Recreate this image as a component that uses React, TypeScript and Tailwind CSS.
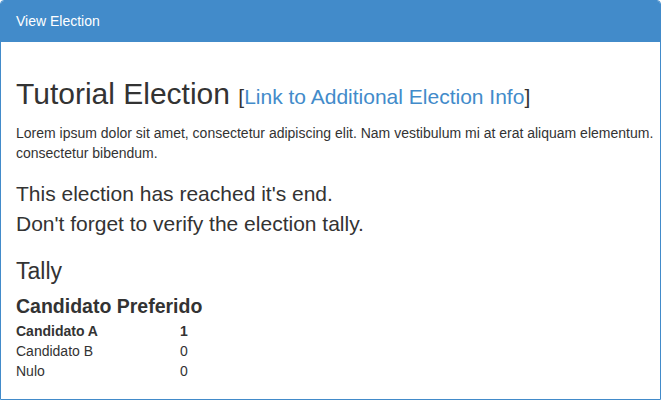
import React from 'react';

const rows = [
  { name: 'Candidato A', votes: 1, winner: true },
  { name: 'Candidato B', votes: 0, winner: false },
  { name: 'Nulo', votes: 0, winner: false },
];

const App: React.FC = () => {
  return (
    <div className="w-[661px] h-[400px] bg-white font-['Liberation_Sans',Arial,sans-serif] text-[#333333] overflow-hidden">
      <div className="h-full flex flex-col border border-[#428bca] rounded-t-[4px] overflow-hidden">
        {/* Panel heading */}
        <div className="bg-[#428bca] border-b border-[#428bca] px-[15px] py-[10px] text-[14px] leading-[20px] text-white">
          View Election
        </div>

        {/* Panel body */}
        <div className="flex-1 px-[15px] pt-[15px] whitespace-nowrap">
          <h1 className="mt-[20px] text-[30px] leading-[33px]">
            Tutorial Election{' '}
            <span className="text-[21px]">
              [<a className="text-[#428bca]">Link to Additional Election Info</a>]
            </span>
          </h1>
          <p className="mt-[10px] text-[14px] leading-[20px]">
            Lorem ipsum dolor sit amet, consectetur adipiscing elit. Nam vestibulum mi at erat aliquam elementum.
            <br />
            consectetur bibendum.
          </p>

          <div className="mt-[16px] text-[21px] leading-[30px]">
            <p>This election has reached it's end.</p>
            <p>Don't forget to verify the election tally.</p>
          </div>

          <h3 className="mt-[20px] text-[23px] leading-[24px]">Tally</h3>
          <h4 className="mt-[13px] text-[19.5px] leading-[21px] font-bold">Candidato Preferido</h4>

          <div className="mt-[4px] text-[14px] leading-[20px]">
            {rows.map((r) => (
              <div key={r.name} className={r.winner ? 'flex font-bold' : 'flex'}>
                <div className="w-[164px]">{r.name}</div>
                <div>{r.votes}</div>
              </div>
            ))}
          </div>
        </div>
      </div>
    </div>
  );
};

export default App;
